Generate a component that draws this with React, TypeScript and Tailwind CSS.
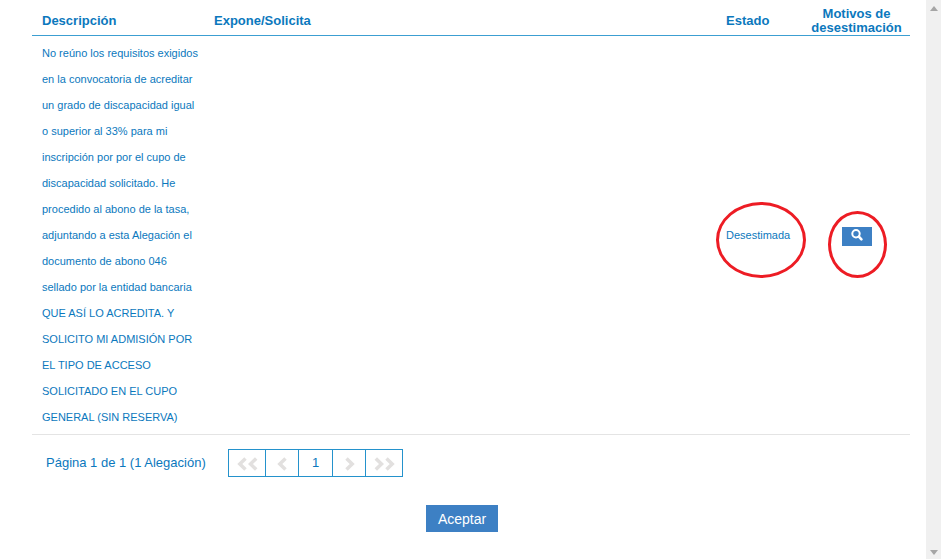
// Modal content: list of claims with their status, pager and accept button
const description = [
  "No reúno los requisitos exigidos",
  "en la convocatoria de acreditar",
  "un grado de discapacidad igual",
  "o superior al 33% para mi",
  "inscripción por por el cupo de",
  "discapacidad solicitado. He",
  "procedido al abono de la tasa,",
  "adjuntando a esta Alegación el",
  "documento de abono 046",
  "sellado por la entidad bancaria",
  "QUE ASÍ LO ACREDITA. Y",
  "SOLICITO MI ADMISIÓN POR",
  "EL TIPO DE ACCESO",
  "SOLICITADO EN EL CUPO",
  "GENERAL (SIN RESERVA)",
];

function SearchIcon() {
  return (
    <svg width="12" height="12" viewBox="0 0 12 12" fill="none" stroke="#fff" aria-hidden="true">
      <circle cx="5" cy="4.8" r="3.7" strokeWidth="2" />
      <path d="M7.9 7.7 L10.4 10.3" strokeWidth="2.6" strokeLinecap="round" />
    </svg>
  );
}

function Chevrons({ double = false, flip = false }: { double?: boolean; flip?: boolean }) {
  return (
    <svg
      width={double ? 21 : 11}
      height="14"
      viewBox={double ? "0 0 21 14" : "0 0 11 14"}
      fill="none"
      stroke="#e2e0df"
      strokeWidth="3.5"
      className={flip ? "rotate-180" : ""}
      aria-hidden="true"
    >
      <path d="M8.5 1.4 L2.8 7 L8.5 12.6" />
      {double && <path d="M19.2 1.4 L13.5 7 L19.2 12.6" />}
    </svg>
  );
}

function RedEllipse({ className }: { className: string }) {
  return (
    <span
      className={`pointer-events-none absolute rounded-[50%] border-3 border-[#ed1c24] ${className}`}
    />
  );
}

export default function App() {
  return (
    <div className="flex min-h-screen bg-white font-['Liberation_Sans',Arial,sans-serif] text-[#0b78bd]">
      <main className="flex-1 pr-4 pl-8">
        <table className="w-full table-fixed border-separate border-spacing-0 text-left">
          <colgroup>
            <col className="w-[172px]" />
            <col />
            <col className="w-[87px]" />
            <col className="w-[107px]" />
          </colgroup>
          <thead>
            <tr className="h-9 text-[13px] leading-[14px]">
              <th className="border-b border-[#3c9fd2] px-2.5 pt-1.5">Descripción</th>
              <th className="border-b border-[#3c9fd2] px-2.5 pt-1.5">Expone/Solicita</th>
              <th className="border-b border-[#3c9fd2] px-2.5 pt-1.5">Estado</th>
              <th className="border-b border-[#3c9fd2] px-2 pt-1.5 text-center">Motivos de desestimación</th>
            </tr>
          </thead>
          <tbody>
            <tr className="text-[11px] leading-[26px]">
              <td className="border-b border-[#e4e4e4] py-1 pl-2.5 whitespace-nowrap">
                {description.map((line) => (
                  <div key={line}>{line}</div>
                ))}
              </td>
              <td className="border-b border-[#e4e4e4]" />
              <td className="border-b border-[#e4e4e4] pl-2.5">
                <span className="relative inline-block">
                  Desestimada
                  <RedEllipse className="-top-5 -left-2.5 h-[76px] w-[90px]" />
                </span>
              </td>
              <td className="border-b border-[#e4e4e4] text-center">
                <span className="relative inline-block align-middle">
                  <button
                    type="button"
                    aria-label="Ver motivos de desestimación"
                    className="flex h-[19px] w-[30px] items-center justify-center bg-[#3d80c4] pb-0.5"
                  >
                    <SearchIcon />
                  </button>
                  <RedEllipse className="-top-4 -left-3.5 h-[67px] w-[59px]" />
                </span>
              </td>
            </tr>
          </tbody>
        </table>

        <nav aria-label="Paginación" className="flex items-center pt-3.5 pl-3.5">
          <span className="w-[182px] text-[13px]">Página 1 de 1 (1 Alegación)</span>
          <div className="flex h-7 divide-x divide-[#2492cc] border border-[#2492cc]">
            <button type="button" disabled aria-label="Primera página" className="flex w-[37px] items-center justify-center pt-0.5">
              <Chevrons double />
            </button>
            <button type="button" disabled aria-label="Página anterior" className="flex w-[33px] items-center justify-center pt-0.5">
              <Chevrons />
            </button>
            <button type="button" className="w-[34px] text-[13px]">1</button>
            <button type="button" disabled aria-label="Página siguiente" className="flex w-[33px] items-center justify-center pt-0.5">
              <Chevrons flip />
            </button>
            <button type="button" disabled aria-label="Última página" className="flex w-9 items-center justify-center pt-0.5">
              <Chevrons double flip />
            </button>
          </div>
        </nav>

        <div className="flex justify-center pt-7 pr-[18px]">
          <button type="button" className="h-[27px] w-[72px] bg-[#3d80c4] text-sm text-white">
            Aceptar
          </button>
        </div>
      </main>

      <div aria-hidden="true" className="flex w-[15px] flex-col items-center justify-between bg-[#f0f0f0] pt-1.5 pb-1">
        <svg width="8" height="5" viewBox="0 0 8 5" fill="#a5a5a5">
          <path d="M4 0 L8 5 H0 Z" />
        </svg>
        <svg width="8" height="5" viewBox="0 0 8 5" fill="#a5a5a5">
          <path d="M0 0 H8 L4 5 Z" />
        </svg>
      </div>
    </div>
  );
}
